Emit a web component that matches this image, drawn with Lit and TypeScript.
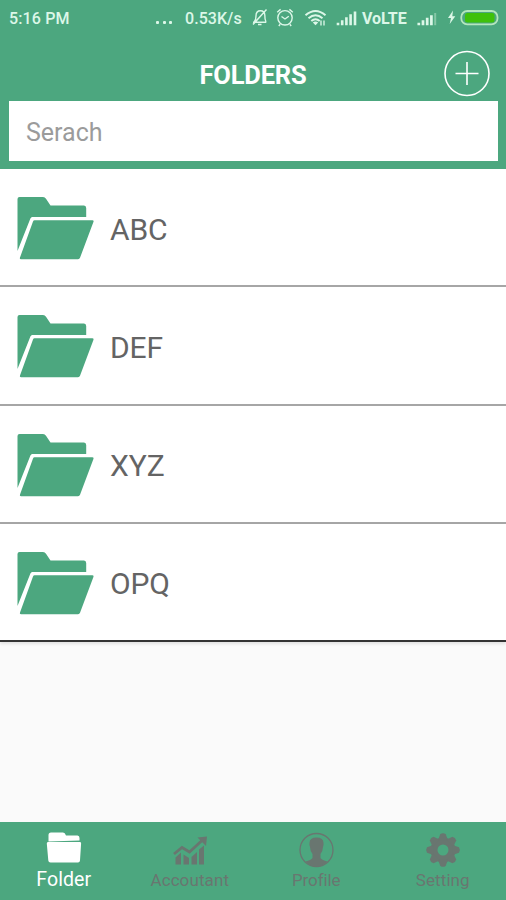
import { LitElement, html, css, svg } from "lit";
import { customElement, property } from "lit/decorators.js";

@customElement("status-bar")
class StatusBar extends LitElement {
  static styles = css`
    :host { display: flex; height: 36px; align-items: center; color: #dcf7e8; font-size: 16px; font-weight: 500; padding: 0 7px 0 9px; box-sizing: border-box; }
    .time { letter-spacing: 0.15px; }
    .dots { margin-left: auto; display: flex; gap: 3.5px; padding-top: 9px; margin-right: 13px; }
    .dot { width: 3px; height: 3px; border-radius: 1px; background: #dcf7e8; }
    .rate { width: 58px; margin-right: 8px; letter-spacing: 0.05px; white-space: nowrap; }
    .icons { display: block; width: 106px; height: 36px; }
    .volte { width: 46px; margin: 0 9px 0 5px; font-weight: 700; letter-spacing: -0.05px; }
    .power { display: block; width: 82px; height: 36px; }
  `;
  render() {
    return html`
      <span class="time">5:16 PM</span>
      <span class="dots"><i class="dot"></i><i class="dot"></i><i class="dot"></i></span>
      <span class="rate">0.53K/s</span>
      <svg class="icons" viewBox="251 0 106 36" fill="none" stroke="#dcf7e8" stroke-width="1.4">
        <path d="M253 22.3h13.3M254.2 22Q256 20 256 16Q256 10.8 260.5 10.8Q264.6 10.8 264.8 15Q264.8 20 266 22M258 24.5h3.5M253 24.5L266.5 9.5"/>
        <circle cx="285" cy="17.8" r="7.2"/>
        <path d="M281.5 16.5l3.5 2.5l3.8-2.8M277.2 12.2l3.4-2.8M292.8 12.2l-3.4-2.8M280.2 24.2l-1.4 1.8M289.8 24.2l1.4 1.8"/>
        <path stroke-width="2" d="M305.5 15.3Q315.5 6.7 325.5 15.3M308.5 18.3Q315.5 12.3 322.5 18.3M311.3 21.1Q315.5 17.5 319.7 21.1"/>
        <path fill="#dcf7e8" stroke="none" d="M312.8 22.4Q315.5 20.4 318.2 22.4L315.5 25.3Z"/>
        <path stroke-width="1.8" d="M321 25.5v-5M324 20.5v5" opacity=".75"/>
        <path stroke-width="2.6" d="M338 25.2v-2.5M342.2 25.2v-5M346.4 25.2v-8M350.6 25.2v-11M355 25.2V11.5"/>
      </svg>
      <span class="volte">VoLTE</span>
      <svg class="power" viewBox="417 0 82 36" fill="none">
        <path stroke="#dcf7e8" stroke-width="2.7" d="M418.8 25.2v-2.5M423 25.2v-5M427.2 25.2v-7.5M431.4 25.2v-10"/>
        <path stroke="#86c7a6" stroke-width="2" d="M435.2 25.2V13"/>
        <path fill="#dcf7e8" d="M453 10.5L448 18h3l-1.3 6l5.6-7.7h-3z"/>
        <rect x="461.3" y="11" width="36.2" height="13.4" rx="6" stroke="#b5e6bd" stroke-width="1.8"/>
        <rect x="465" y="13" width="29.5" height="9.4" rx="2.5" fill="#3fc10a"/>
      </svg>`;
  }
}

@customElement("folder-row")
class FolderRow extends LitElement {
  @property() name = "";
  static styles = css`
    :host { display: flex; align-items: flex-start; height: 118.33px; box-sizing: border-box; background: #fff; padding: 28px 0 0 17px; border-bottom: 2px solid #a6a6a6; }
    :host(.last) { border-bottom-color: #333; box-shadow: 0 2px 3px #0000001a; }
    .folder { display: block; width: 78px; height: 64px; flex: none; }
    .name { margin-left: 15px; font-size: 30px; line-height: 64px; color: #646464; letter-spacing: -0.1px; padding-top: 0.5px; }
  `;
  render() {
    return html`
      <svg class="folder" viewBox="0 0 78 64" fill="#4ca77f">
        <path d="M2.5 0H26Q28 0 29 1.8L33.5 8.5H67Q69.2 8.5 69.2 11V20H15.2Q14 20 13.4 21.5L.5 54V2Q.5 0 2.5 0Z"/>
        <path d="M17.5 23.3H75.5Q77 23.3 76.5 24.8L63 60.8Q62.5 62.2 61 62.2H4Q2.3 62.2 3 60.5L16 24.5Q16.5 23.3 17.5 23.3Z"/>
      </svg>
      <span class="name">${this.name}</span>`;
  }
}

const gearTeeth = [0, 45, 90, 135, 180, 225, 270, 315];

const tabs = [
  {
    label: "Folder", kind: "on",
    icon: svg`<path d="M2.5 9.5V3Q2.5.5 5 .5H17Q19 .5 20 3.5H31.5Q33.5 3.5 33.5 6V8.5Z"/><path d="M2 10H34Q35.3 10 35.1 11.5L34 28.5Q33.8 30.5 32 30.5H4.5Q2.5 30.5 2.3 28.5L.8 11.5Q.7 10 2 10Z"/>`,
  },
  {
    label: "Accoutant", kind: "chart",
    icon: svg`<path d="M3.5 25.5L9 20.5V32.5H3.5ZM11.5 22.5L17 26V32.5H11.5ZM19.5 25L25 20V32.5H19.5ZM27 17.5L32 13.5V32.5H27Z"/><path fill="none" stroke="currentColor" stroke-width="2.8" d="M2 22L10 15.5L17.5 20L30 8.5"/><path d="M25.5 5.5L35 4.5L34 14Z"/>`,
  },
  {
    label: "Profile", kind: "person",
    icon: svg`<circle cx="18.5" cy="18" r="16.5" fill="none" stroke="currentColor" stroke-width="1.3"/><path d="M11.5 11Q11.5 5.5 18.5 5.5Q25.5 5.5 25.5 11Q25.8 13 25.1 14.5Q24.8 19.5 22.5 22V26Q24 28 29.5 29.5Q24.5 34.5 18.5 34.5Q12.5 34.5 7.5 29.5Q13 28 14.5 26V22Q12.2 19.5 11.9 14.5Q11.2 13 11.5 11Z"/>`,
  },
  {
    label: "Setting", kind: "gear",
    icon: svg`<circle cx="18" cy="18" r="9" fill="none" stroke="currentColor" stroke-width="7"/>${gearTeeth.map(
      (a) => svg`<path transform="rotate(${a} 18 18)" d="M13 8.5L15.3 2Q18 .3 20.7 2L23 8.5Z"/>`
    )}`,
  },
];

@customElement("app-root")
class AppRoot extends LitElement {
  static styles = css`
    :host { display: flex; flex-direction: column; height: 900px; background: #fafafa; font-family: Roboto, sans-serif; overflow: hidden; }
    .header { height: 169px; flex: none; background: #4ca77f; box-sizing: border-box; }
    .titlebar { display: grid; grid-template-columns: 1fr auto 1fr; align-items: center; height: 65px; padding: 11px 15px 0; box-sizing: border-box; }
    .title { grid-column: 2; margin: 0; color: #fff; font-size: 25.5px; font-weight: 700; letter-spacing: -0.2px; line-height: 28px; padding-top: 1px; }
    .add { justify-self: end; display: block; width: 48px; height: 48px; }
    .search { display: flex; align-items: center; height: 60px; margin: 0 8px 0 9px; padding: 3px 17px 0; box-sizing: border-box; background: #fff; color: #9b9b9b; font-size: 25px; }
    .list { flex: 1; }
    .tabs { display: grid; grid-template-columns: repeat(4, 1fr); height: 78px; flex: none; background: #4ca77f; }
    .tab { display: flex; flex-direction: column; align-items: center; color: #697670; padding-top: 9.5px; font-size: 17px; line-height: 22px; }
    .glyph { display: block; width: 36px; height: 37px; fill: currentColor; }
    .text { letter-spacing: 0.1px; }
    .person .text { letter-spacing: -0.1px; }
    .on { color: #fff; font-size: 19.5px; padding-left: 1px; }
  `;
  render() {
    return html`
      <div class="header">
        <status-bar></status-bar>
        <div class="titlebar">
          <h1 class="title">FOLDERS</h1>
          <svg class="add" viewBox="0 0 48 48" fill="none" stroke="#fff" stroke-width="1.6">
            <circle cx="24" cy="23.5" r="22"/><path d="M24 12v23M12.5 23.5h23"/>
          </svg>
        </div>
        <div class="search">Serach</div>
      </div>
      <div class="list">
        ${["ABC", "DEF", "XYZ", "OPQ"].map((n, i) => html`<folder-row class=${i === 3 ? "last" : ""} .name=${n}></folder-row>`)}
      </div>
      <div class="tabs">
        ${tabs.map((t) => html`<div class="tab ${t.kind}"><svg class="glyph" viewBox="0 0 36 37">${t.icon}</svg><span class="text">${t.label}</span></div>`)}
      </div>`;
  }
}
